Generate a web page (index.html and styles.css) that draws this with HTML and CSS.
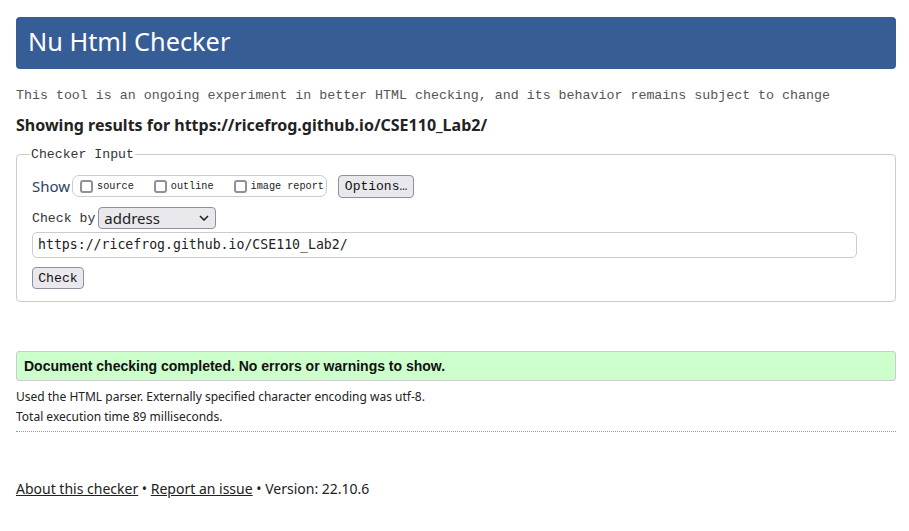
FILE: index.html
```html
<!DOCTYPE html>
<html lang="en">
<head>
<meta charset="utf-8">
<title>Nu Html Checker</title>
<link rel="stylesheet" href="styles.css">
</head>
<body>
<div class="page">
  <h1 class="banner">Nu Html Checker</h1>
  <p class="tagline">This tool is an ongoing experiment in better HTML checking, and its behavior remains subject to change</p>
  <p class="showing">Showing results for https://ricefrog.github.io/CSE110_Lab2/</p>
  <fieldset class="input-box">
    <legend class="legend">Checker Input</legend>
    <div class="show-row">
      <span class="show-label">Show</span>
      <div class="show-group">
        <label class="opt"><input type="checkbox" class="cb"><span>source</span></label>
        <label class="opt"><input type="checkbox" class="cb"><span>outline</span></label>
        <label class="opt"><input type="checkbox" class="cb"><span>image report</span></label>
      </div>
      <button class="btn btn-options" type="button">Options…</button>
    </div>
    <div class="by-row">
      <span class="by-label">Check by</span>
      <div class="select">
        <span>address</span>
        <svg class="chev" width="10" height="6" viewBox="0 0 10 6"><path d="M1 1 L5 5 L9 1" fill="none" stroke="#222" stroke-width="1.6"/></svg>
      </div>
    </div>
    <div class="url">https://ricefrog.github.io/CSE110_Lab2/</div>
    <button class="btn btn-check" type="button">Check</button>
  </fieldset>
  <div class="success">Document checking completed. No errors or warnings to show.</div>
  <div class="details">
    <p>Used the HTML parser. Externally specified character encoding was utf-8.</p>
    <p>Total execution time 89 milliseconds.</p>
  </div>
  <p class="footer"><a href="#">About this checker</a> • <a href="#">Report an issue</a> • Version: 22.10.6</p>
</div>
</body>
</html>
```
FILE: styles.css
```css
html, body {
  margin: 0;
  padding: 0;
  background: #fff;
}
body {
  font-family: "Noto Sans", "Open Sans", sans-serif;
  color: #222;
}
.page {
  width: 880px;
  padding: 17px 0 0 16px;
}
.banner {
  margin: 0;
  height: 52px;
  box-sizing: border-box;
  background: #365d95;
  color: #fff;
  border-radius: 4px;
  font-family: "Noto Sans", sans-serif;
  font-weight: 400;
  font-size: 25.3px;
  line-height: 48px;
  padding-left: 12px;
}
.tagline {
  margin: 18px 0 0 0;
  font-family: "Liberation Mono", monospace;
  font-size: 13.3px;
  line-height: 18px;
  color: #555;
  white-space: nowrap;
}
.showing {
  margin: 9px 0 0 0;
  font-weight: 700;
  font-size: 16px;
  line-height: 22px;
  color: #222;
}
.input-box {
  margin: 11px 0 0 0;
  padding: 12px 15px 12px 15px;
  border: 1px solid #ccc;
  border-radius: 4px;
  min-width: 0;
}
.legend {
  padding: 0 1px;
  font-family: "Liberation Mono", monospace;
  font-size: 13.2px;
  color: #333;
  margin-left: -2px;
}
.show-row {
  display: flex;
  align-items: center;
  height: 24px;
}
.show-label {
  font-size: 15px;
  color: #2e4260;
  margin-right: 2px;
}
.show-group {
  display: flex;
  align-items: center;
  flex-shrink: 0;
  height: 22px;
  box-sizing: border-box;
  border: 1px solid #ccc;
  border-radius: 7px;
  padding: 0 6px 0 7px;
  width: 255px;
}
.opt {
  display: flex;
  align-items: center;
  flex-shrink: 0;
  white-space: nowrap;
  font-family: "Liberation Mono", monospace;
  font-size: 10.2px;
  color: #222;
  margin-right: 20px;
}
.opt:last-child { margin-right: 0; }
.cb {
  appearance: none;
  -webkit-appearance: none;
  flex-shrink: 0;
  width: 13px;
  height: 13px;
  margin: 0 4px 0 0;
  border: 2px solid #8f8f9d;
  border-radius: 3px;
  box-sizing: border-box;
  background: #fff;
}
.btn {
  font-family: "Liberation Mono", monospace;
  font-size: 13px;
  color: #111;
  background: #e9e9ed;
  border: 1px solid #8f8f9d;
  border-radius: 4px;
  padding: 0 6px;
  height: 23px;
  box-sizing: border-box;
}
.btn-options {
  margin-left: 11px;
  width: 76px;
  padding: 0;
  flex-shrink: 0;
}
.by-row {
  display: flex;
  align-items: center;
  margin-top: 9px;
  height: 22px;
}
.by-label {
  font-family: "Liberation Mono", monospace;
  font-size: 13.2px;
  color: #333;
  margin-right: 3px;
}
.select {
  display: flex;
  align-items: center;
  justify-content: space-between;
  width: 118px;
  height: 22px;
  box-sizing: border-box;
  border: 1px solid #8f8f9d;
  border-radius: 4px;
  background: #e9e9ed;
  padding: 0 6px 0 5px;
  font-size: 15px;
  color: #222;
}
.chev { display: block; }
.url {
  margin-top: 3px;
  height: 26px;
  box-sizing: border-box;
  border: 1px solid #ccc;
  border-radius: 5px;
  width: 825px;
  padding-left: 5px;
  font-family: "DejaVu Sans Mono", monospace;
  font-size: 13.2px;
  line-height: 24px;
  color: #222;
}
.btn-check {
  display: block;
  margin-top: 9px;
  width: 52px;
  height: 22px;
  padding: 0;
  font-size: 13.2px;
}
.success {
  margin-top: 49px;
  height: 30px;
  box-sizing: border-box;
  background: #ccffcc;
  border: 1px solid #ccc;
  border-radius: 3px;
  padding-left: 7px;
  font-family: "Liberation Sans", Arial, sans-serif;
  font-weight: 700;
  font-size: 14px;
  line-height: 28px;
  color: #111;
}
.details {
  margin-top: 6px;
  padding-bottom: 4px;
  border-bottom: 1px dotted #999;
  font-size: 12px;
  line-height: 20px;
  color: #222;
}
.details p { margin: 0; }
.footer {
  margin: 47px 0 0 0;
  font-size: 14px;
  line-height: 20px;
  color: #222;
}
.footer a {
  color: #222;
  text-decoration: underline;
}
```
